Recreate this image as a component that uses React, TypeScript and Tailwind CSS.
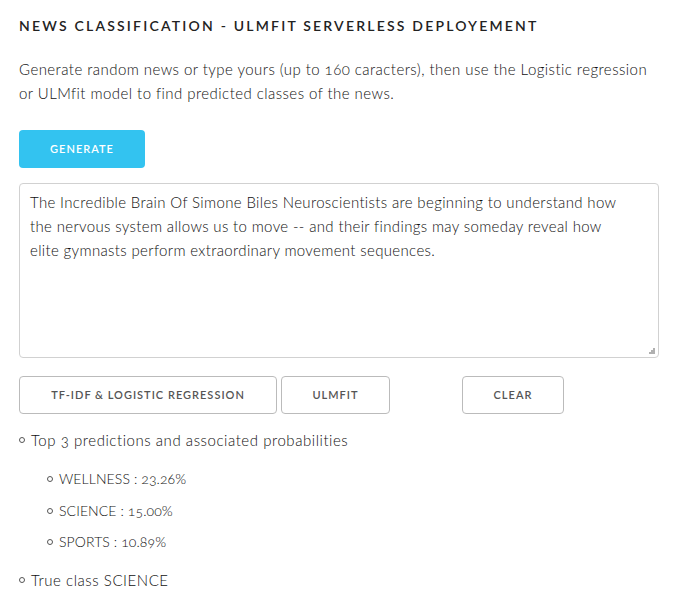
import { useState } from 'react'

const predictions = [
  { label: 'WELLNESS', value: '23.26%' },
  { label: 'SCIENCE', value: '15.00%' },
  { label: 'SPORTS', value: '10.89%' },
]

const sample =
  'The Incredible Brain Of Simone Biles Neuroscientists are beginning to understand how the nervous system allows us to move -- and their findings may someday reveal how elite gymnasts perform extraordinary movement sequences.'

function Bullet() {
  return <span className="inline-block w-[6px] h-[6px] rounded-full border border-[#555] shrink-0" />
}

export default function App() {
  const [text, setText] = useState(sample)

  return (
    <div className="min-h-screen bg-white text-[#111] font-['Lato','Noto_Sans',sans-serif] oldstyle-nums">
      <div className="w-[640px] ml-[19px] pt-[14px]">
        <h1 className="text-[14px] leading-[24px] font-semibold tracking-[2.2px] text-[#222]">
          NEWS CLASSIFICATION - ULMFIT SERVERLESS DEPLOYEMENT
        </h1>

        <p className="mt-[19px] text-[15px] leading-[24px] font-light tracking-[0.45px]">
          Generate random news or type yours (up to 160 caracters), then use the Logistic regression or ULMfit model to find predicted classes of the news.
        </p>

        <button className="mt-[25px] h-[38px] w-[126px] rounded-[4px] bg-[#33c3f0] text-white text-[11px] font-semibold tracking-[1px] uppercase">
          Generate
        </button>

        {/* textarea with dotted grip drawn over the corner */}
        <div className="relative mt-[15px]">
          <textarea
            value={text}
            onChange={(e) => setText(e.target.value)}
            className="block w-[640px] h-[175px] rounded-[4px] border border-[#d1d1d1] pl-[10px] pr-[24px] pt-[6px] text-[15px] leading-[24px] font-light tracking-[0.35px] text-[#111] outline-none resize-none"
          />
          <svg className="absolute right-[4px] bottom-[4px]" width="7" height="7" viewBox="0 0 7 7" fill="#b0b0b0">
            <rect x="5" y="1" width="2" height="2" />
            <rect x="3" y="3" width="2" height="2" />
            <rect x="5" y="3" width="2" height="2" />
            <rect x="1" y="5" width="2" height="2" />
            <rect x="3" y="5" width="2" height="2" />
            <rect x="5" y="5" width="2" height="2" />
          </svg>
        </div>

        <div className="mt-[18px] flex items-center">
          <button className="h-[38px] w-[258px] rounded-[4px] border border-[#bbb] text-[#555] text-[11px] font-semibold tracking-[1px] uppercase">
            TF-IDF &amp; Logistic regression
          </button>
          <button className="ml-[4px] h-[38px] w-[109px] rounded-[4px] border border-[#bbb] text-[#555] text-[11px] font-semibold tracking-[1px] uppercase">
            ULMfit
          </button>
          <button className="ml-[72px] h-[38px] w-[102px] rounded-[4px] border border-[#bbb] text-[#555] text-[11px] font-semibold tracking-[1px] uppercase">
            Clear
          </button>
        </div>

        <ul className="mt-[14px] text-[15px] leading-[24px] font-light tracking-[0.55px]">
          <li className="flex items-center gap-[6px]">
            <Bullet />
            <span>Top 3 predictions and associated probabilities</span>
          </li>
          <li className="mt-[15px] ml-[28px]">
            <ul>
              {predictions.map((p, i) => (
                <li key={p.label} className={i === 0 ? 'flex items-center gap-[6px]' : 'mt-[7.5px] flex items-center gap-[6px]'}>
                  <Bullet />
                  <span className="text-[14px] tracking-[0.1px]">
                    {p.label} : {p.value}
                  </span>
                </li>
              ))}
            </ul>
          </li>
          <li className="mt-[14px] flex items-center gap-[6px]">
            <Bullet />
            <span>True class SCIENCE</span>
          </li>
        </ul>
      </div>
    </div>
  )
}
